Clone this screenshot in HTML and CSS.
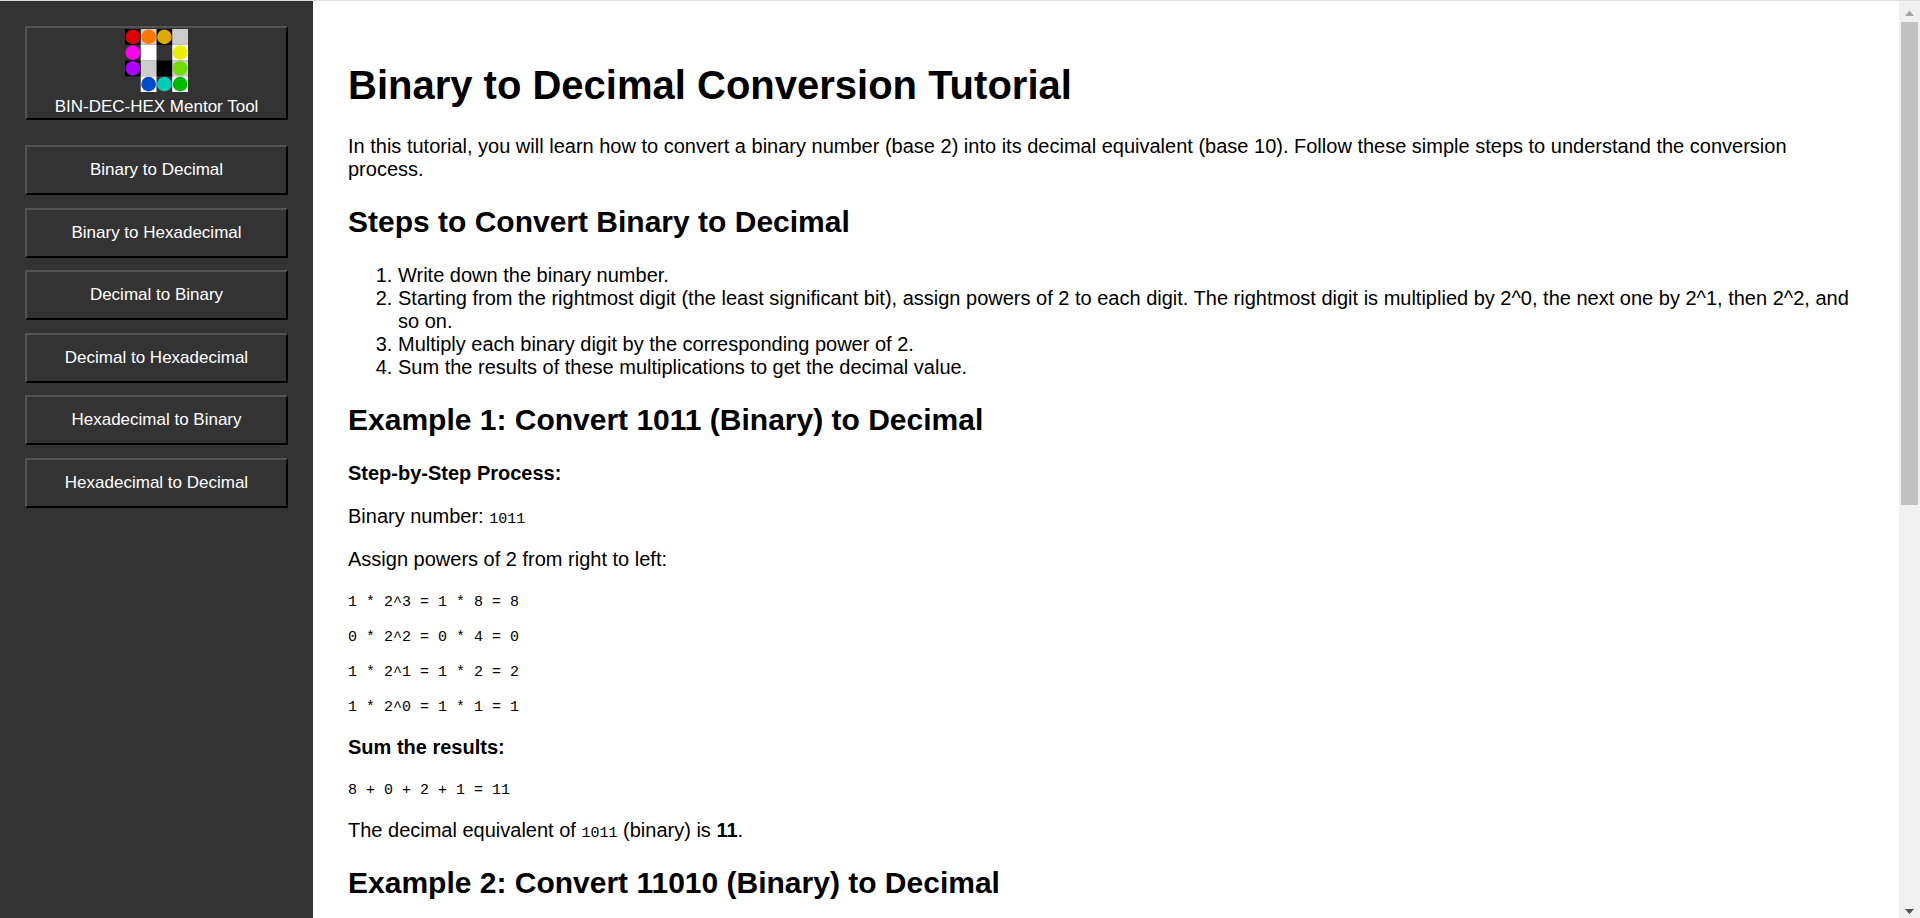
FILE: index.html
```html
<!DOCTYPE html>
<html lang="en">
<head>
<meta charset="utf-8">
<title>BIN-DEC-HEX Mentor Tool</title>
<link rel="stylesheet" href="styles.css">
</head>
<body class="page">
<nav class="sidebar">
  <button class="nav-button home" type="button">
    <svg class="logo" viewBox="0 0 64 64" aria-hidden="true">
      <path fill="#000" d="M0 0h16v16H0zM32 0h16v16H32zM0 32h16v16H0zM32 32h16v16H32z"/>
      <path fill="#ccc" d="M16 0h16v16H16zM48 0h16v16H48zM16 32h16v16H16zM48 32h16v16H48z"/>
      <path fill="#fff" d="M16 16h16v16H16zM48 16h16v16H48zM16 48h16v16H16zM48 48h16v16H48z"/>
      <circle cx="8" cy="8" r="7.5" fill="#dd0000"/>
      <circle cx="24" cy="8" r="7.5" fill="#ff7700"/>
      <circle cx="40" cy="8" r="7.5" fill="#e0aa00"/>
      <circle cx="8" cy="24" r="7.5" fill="#ff00ee"/>
      <circle cx="56" cy="24" r="7.5" fill="#eeee00"/>
      <circle cx="8" cy="40" r="7.5" fill="#aa00ff"/>
      <circle cx="56" cy="40" r="7.5" fill="#70dd00"/>
      <circle cx="24" cy="56" r="7.5" fill="#004ccc"/>
      <circle cx="40" cy="56" r="7.5" fill="#00ccb8"/>
      <circle cx="56" cy="56" r="7.5" fill="#00bb00"/>
    </svg>
    <span>BIN-DEC-HEX Mentor Tool</span>
  </button>
  <div class="nav-list">
    <button class="nav-button" type="button">Binary to Decimal</button>
    <button class="nav-button" type="button">Binary to Hexadecimal</button>
    <button class="nav-button" type="button">Decimal to Binary</button>
    <button class="nav-button" type="button">Decimal to Hexadecimal</button>
    <button class="nav-button" type="button">Hexadecimal to Binary</button>
    <button class="nav-button" type="button">Hexadecimal to Decimal</button>
  </div>
</nav>
<main class="content">
  <h1 class="title">Binary to Decimal Conversion Tutorial</h1>
  <p class="text">In this tutorial, you will learn how to convert a binary number (base 2) into its decimal equivalent (base 10). Follow these simple steps to understand the conversion process.</p>
  <h2 class="heading">Steps to Convert Binary to Decimal</h2>
  <ol class="steps">
    <li>Write down the binary number.</li>
    <li>Starting from the rightmost digit (the least significant bit), assign powers of 2 to each digit. The rightmost digit is multiplied by 2^0, the next one by 2^1, then 2^2, and so on.</li>
    <li>Multiply each binary digit by the corresponding power of 2.</li>
    <li>Sum the results of these multiplications to get the decimal value.</li>
  </ol>
  <h2 class="heading">Example 1: Convert 1011 (Binary) to Decimal</h2>
  <p class="text"><strong>Step-by-Step Process:</strong></p>
  <p class="text">Binary number: <code class="code">1011</code></p>
  <p class="text">Assign powers of 2 from right to left:</p>
  <p class="formula">1 * 2^3 = 1 * 8 = 8</p>
  <p class="formula">0 * 2^2 = 0 * 4 = 0</p>
  <p class="formula">1 * 2^1 = 1 * 2 = 2</p>
  <p class="formula">1 * 2^0 = 1 * 1 = 1</p>
  <p class="text"><strong>Sum the results:</strong></p>
  <p class="formula">8 + 0 + 2 + 1 = 11</p>
  <p class="text">The decimal equivalent of <code class="code">1011</code> (binary) is <strong>11</strong>.</p>
  <h2 class="heading">Example 2: Convert 11010 (Binary) to Decimal</h2>
</main>
<div class="scrollbar" aria-hidden="true">
  <svg class="arrow arrow-up" viewBox="0 0 21 21"><path d="M10.500 9.500L15 15H6z"/></svg>
  <div class="track"><div class="thumb"></div></div>
  <svg class="arrow" viewBox="0 0 21 21"><path d="M6 12h9l-4.500 5z"/></svg>
</div>
</body>
</html>
```
FILE: styles.css
```css
* {
  box-sizing: border-box;
}

.page {
  display: flex;
  height: 100vh;
  margin: 0;
  border-top: 1px solid #dedede;
  background: #fff;
  color: #000;
  font: 20px/23px Arial, "Liberation Sans", sans-serif;
}

.sidebar {
  flex: 0 0 313px;
  display: flex;
  flex-direction: column;
  gap: 25px;
  padding: 25px;
  background: #333;
}

.nav-list {
  display: flex;
  flex-direction: column;
  justify-content: space-between;
  min-height: 363px;
}

.nav-button {
  padding: 13px 12px 14px;
  border: 2px solid;
  border-color: #545454 #000 #000 #545454;
  background: #333;
  color: #fff;
  font: 17px/19px Arial, "Liberation Sans", sans-serif;
  cursor: pointer;
}

.home {
  display: flex;
  flex-direction: column;
  align-items: center;
  gap: 5px;
  padding: 1px 0 2px;
}

.logo {
  width: 63px;
  height: 63px;
}

.content {
  flex: 1;
  min-width: 0;
  padding: 35px;
  overflow-y: auto;
  scrollbar-width: none;
}

.title {
  margin: 27px 0;
  font-size: 40px;
  line-height: 45px;
}

.heading {
  margin: 24px 0 25px;
  font-size: 30px;
  line-height: 34px;
}

.text {
  margin: 20px 0;
}

.steps {
  margin: 20px 0;
  padding-left: 50px;
}

.code,
.formula {
  font-family: "Liberation Mono", monospace;
  font-size: 15px;
}

.code {
  line-height: 1;
}

.formula {
  margin: 15px 0;
  padding-top: 3px;
  line-height: 17px;
}

.scrollbar {
  flex: 0 0 21px;
  display: flex;
  flex-direction: column;
  background: #f0f0f0;
}

.arrow {
  flex: none;
  width: 21px;
  height: 21px;
  fill: #505050;
}

.arrow-up {
  fill: #a3a3a3;
}

.track {
  flex: 1;
  padding: 0 2px;
}

.thumb {
  height: 55.2%;
  background: #c1c1c1;
}
```
